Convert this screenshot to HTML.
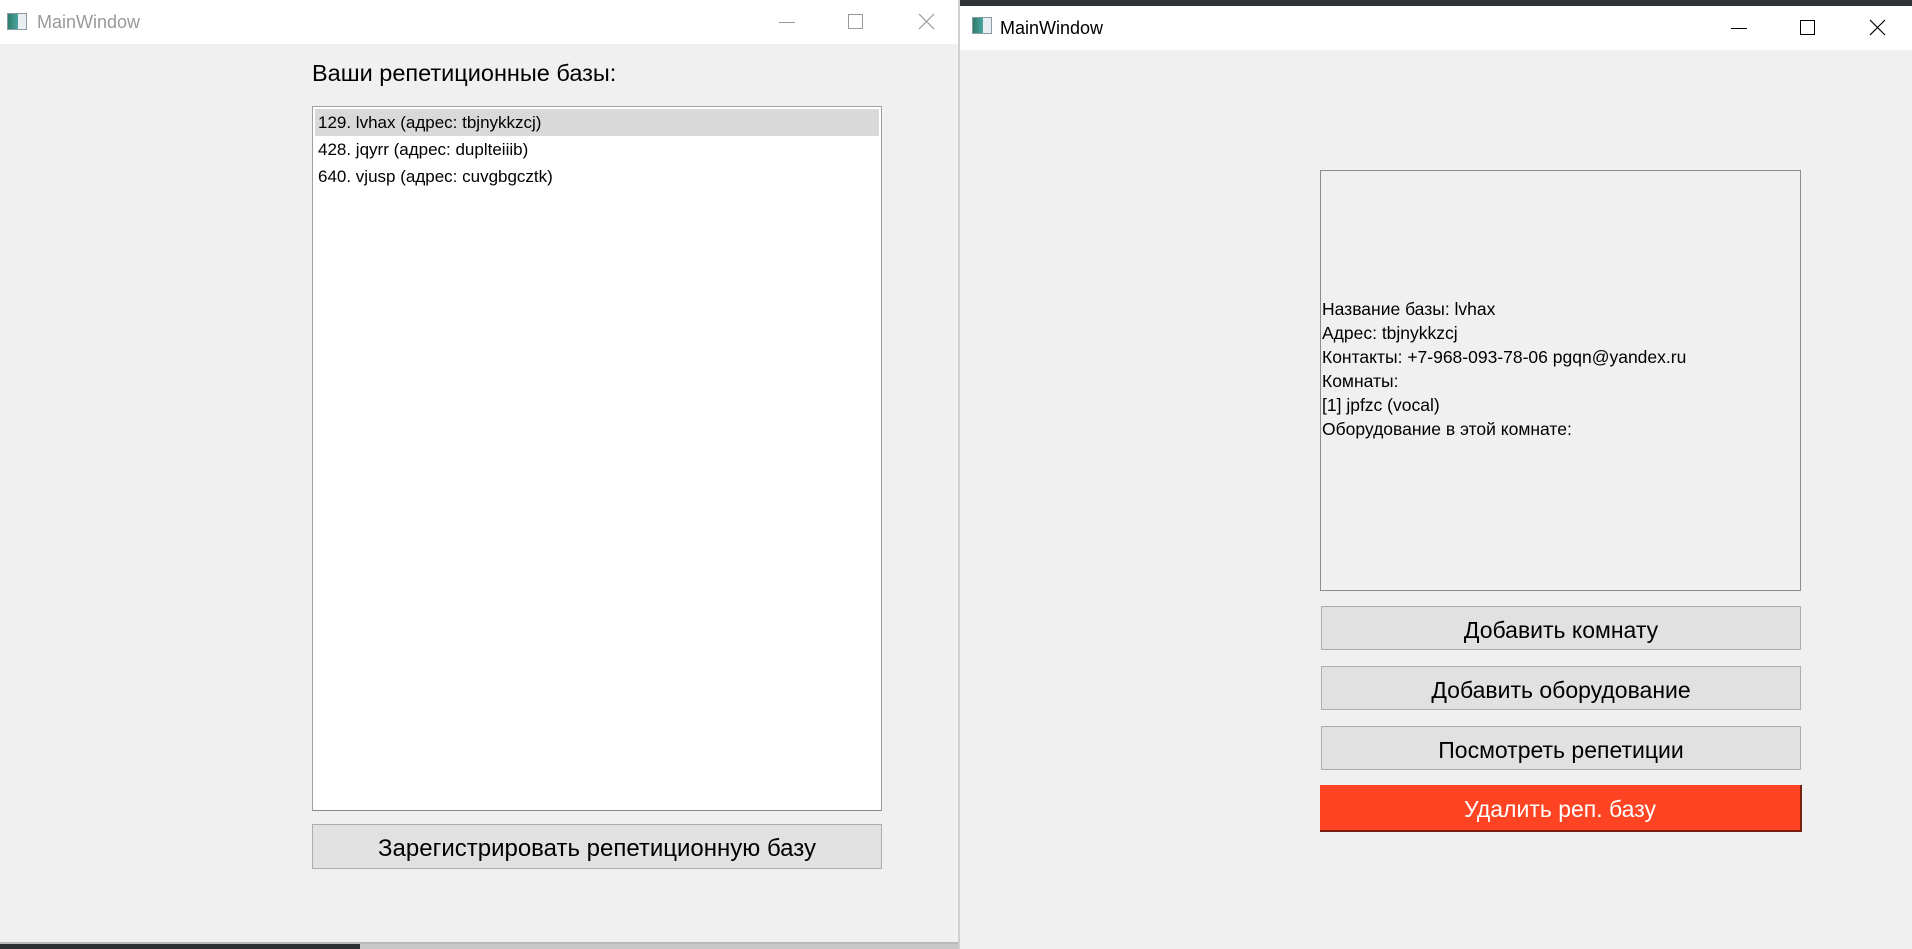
<!DOCTYPE html>
<html><head><meta charset="utf-8"><style>
*{margin:0;padding:0;box-sizing:border-box}
body{width:1912px;height:949px;overflow:hidden;background:#f0f0f0;position:relative;font-family:"Segoe UI","Liberation Sans","DejaVu Sans",sans-serif;color:#000}
.abs{position:absolute}
.tb{background:#fff}
.ico{position:absolute;width:20px;height:17px;border:1px solid #8a9aa6;background:linear-gradient(90deg,#2e7d6a 0,#4aa3a0 55%,#e8eef2 56%,#e8eef2 100%)}
.ttl{position:absolute;font-size:18px}
.btn{position:absolute;background:#e1e1e1;border:1px solid #adadad;text-align:center;font-size:23px;line-height:46px}
.li{position:absolute;left:318px;font-size:17px;line-height:27px;white-space:nowrap}
.info{position:absolute;left:1322px;font-size:17.5px;line-height:24px;white-space:nowrap}
</style></head><body>
<!-- left window -->
<div class="abs tb" style="left:0;top:0;width:960px;height:44px"></div>
<div class="ico" style="left:7px;top:13px"></div>
<div class="ttl" style="left:37px;top:12px;color:#999">MainWindow</div>
<div class="abs" style="left:779px;top:22px;width:16px;height:1px;background:#999"></div>
<div class="abs" style="left:848px;top:14px;width:15px;height:15px;border:1px solid #999"></div>
<svg class="abs" style="left:918px;top:13px" width="17" height="17"><path d="M1 1L16 16M16 1L1 16" stroke="#999" stroke-width="1.2"/></svg>
<div class="abs" style="left:312px;top:60px;font-size:23.5px">Ваши репетиционные базы:</div>
<div class="abs" style="left:312px;top:106px;width:570px;height:705px;background:#fff;border:1px solid #a0a0a0;border-bottom-color:#828790"></div>
<div class="abs" style="left:315px;top:109px;width:564px;height:27px;background:#d9d9d9"></div>
<div class="li" style="top:109px">129. lvhax (адрес: tbjnykkzcj)</div>
<div class="li" style="top:136px">428. jqyrr (адрес: duplteiiib)</div>
<div class="li" style="top:163px">640. vjusp (адрес: cuvgbgcztk)</div>
<div class="btn" style="left:312px;top:824px;width:570px;height:45px;line-height:47px;font-size:24px">Зарегистрировать репетиционную базу</div>
<div class="abs" style="left:0;top:942px;width:960px;height:2px;background:#b9b9b9"></div>
<div class="abs" style="left:0;top:944px;width:360px;height:5px;background:#2b2d30"></div>
<div class="abs" style="left:360px;top:944px;width:600px;height:5px;background:#c8c8c8"></div>
<!-- right window -->
<div class="abs" style="left:958px;top:0;width:2px;height:949px;background:#d0d0d0"></div>
<div class="abs" style="left:960px;top:0;width:952px;height:6px;background:#2f3337"></div>
<div class="abs tb" style="left:960px;top:6px;width:952px;height:44px"></div>
<div class="ico" style="left:972px;top:17px"></div>
<div class="ttl" style="left:1000px;top:18px">MainWindow</div>
<div class="abs" style="left:1731px;top:28px;width:16px;height:1px;background:#000"></div>
<div class="abs" style="left:1800px;top:20px;width:15px;height:15px;border:1px solid #000"></div>
<svg class="abs" style="left:1869px;top:19px" width="17" height="17"><path d="M1 1L16 16M16 1L1 16" stroke="#000" stroke-width="1.2"/></svg>
<div class="abs" style="left:1320px;top:170px;width:481px;height:421px;border:1px solid #8c8c8c"></div>
<div class="info" style="top:297px">Название базы: lvhax</div>
<div class="info" style="top:321px">Адрес: tbjnykkzcj</div>
<div class="info" style="top:345px">Контакты: +7-968-093-78-06 pgqn@yandex.ru</div>
<div class="info" style="top:369px">Комнаты:</div>
<div class="info" style="top:393px">[1] jpfzc (vocal)</div>
<div class="info" style="top:417px">Оборудование в этой комнате:</div>
<div class="btn" style="left:1321px;top:606px;width:480px;height:44px">Добавить комнату</div>
<div class="btn" style="left:1321px;top:666px;width:480px;height:44px">Добавить оборудование</div>
<div class="btn" style="left:1321px;top:726px;width:480px;height:44px">Посмотреть репетиции</div>
<div class="btn" style="left:1320px;top:785px;width:482px;height:47px;background:#ff4424;border:none;border-right:2px solid #7a2010;border-bottom:2px solid #7a2010;color:#fff;line-height:49px">Удалить реп. базу</div>
</body></html>
